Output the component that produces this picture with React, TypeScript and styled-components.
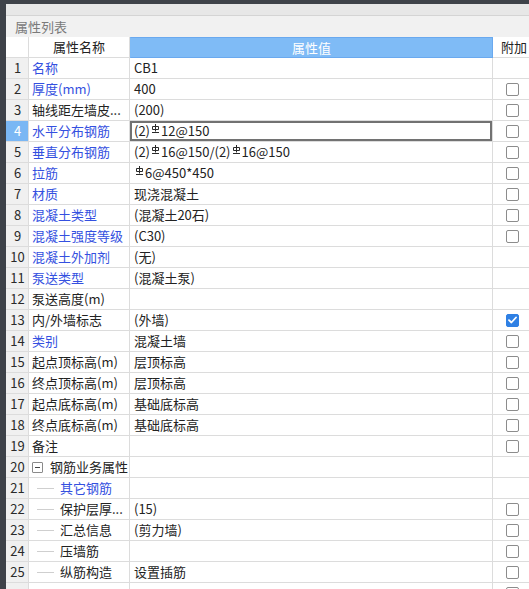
import React from "react";
import styled, { createGlobalStyle, css } from "styled-components";

const Global = createGlobalStyle`
  html, body { margin: 0; padding: 0; background: #ffffff; overflow: hidden; }
  body { font-family: "Noto Sans CJK SC", "Noto Sans", sans-serif; font-size: 13px; }
`;

const Page = styled.div`
  width: 529px;
  height: 589px;
  display: flex;
  flex-direction: column;
  overflow: hidden;
`;

const TopBar = styled.div`
  height: 4px;
  flex: none;
  background: #3e4249;
`;

const Body = styled.div`
  flex: 1;
  display: flex;
  min-height: 0;
`;

const LeftEdge = styled.div`
  width: 6px;
  flex: none;
  background: #3e4249;
`;

const Panel = styled.div`
  flex: 1;
  display: flex;
  flex-direction: column;
  min-width: 0;
  overflow: hidden;
`;

const SubBar = styled.div`
  height: 11px;
  flex: none;
  background: #e7e7e7;
  border-bottom: 1px solid #d4d4d4;
`;

const TitleBar = styled.div`
  height: 21px;
  flex: none;
  background: #f1f1f1;
  color: #7a7a7a;
  display: flex;
  align-items: center;
  padding-left: 9px;
  font-size: 13px;
`;

const Grid = styled.div`
  display: grid;
  grid-template-columns: 23px 101px 363px 44px;
  grid-auto-rows: 21px;
  width: 531px;
`;

const cellBase = css`
  box-sizing: border-box;
  border-right: 1px solid #dcdcdc;
  border-bottom: 1px solid #dcdcdc;
  display: flex;
  align-items: center;
  white-space: nowrap;
  overflow: hidden;
  color: #222;
  line-height: 20px;
`;

const HeadCell = styled.div<{ $accent?: boolean; $left?: boolean }>`
  ${cellBase};
  justify-content: ${(p) => (p.$left ? "flex-start" : "center")};
  padding-left: ${(p) => (p.$left ? "8px" : "0")};
  background: ${(p) => (p.$accent ? "#7fbbf6" : "#ffffff")};
  color: ${(p) => (p.$accent ? "#ffffff" : "#222")};
  ${(p) =>
    p.$accent &&
    css`
      border: 1px solid #6aa9ef;
      border-left-color: #7fbbf6;
    `}
`;

const NumCell = styled.div<{ $active?: boolean }>`
  ${cellBase};
  justify-content: center;
  background: ${(p) => (p.$active ? "#7ab7f4" : "#f0f0f0")};
  color: ${(p) => (p.$active ? "#ffffff" : "#2a2a2a")};
  padding-left: 1px;
`;

const NameCell = styled.div<{ $blue?: boolean; $indent: number }>`
  ${cellBase};
  color: ${(p) => (p.$blue ? "#3450e0" : "#222")};
  padding-left: ${(p) => p.$indent}px;
`;

const ValueCell = styled.div<{ $editing?: boolean }>`
  ${cellBase};
  padding-left: 4px;
  ${(p) =>
    p.$editing &&
    css`
      box-shadow: inset 0 0 0 2px #727272;
    `}
`;

const ExtraCell = styled.div`
  ${cellBase};
  padding-left: 13px;
  border-right: none;
`;

const Box = styled.div<{ $checked?: boolean }>`
  width: 13px;
  height: 13px;
  box-sizing: border-box;
  border-radius: 2px;
  border: 1px solid ${(p) => (p.$checked ? "#2f80e4" : "#8c8c8c")};
  background: ${(p) => (p.$checked ? "#2f80e4" : "#ffffff")};
  display: flex;
  align-items: center;
  justify-content: center;
`;

const TreeToggle = styled.div`
  width: 11px;
  height: 11px;
  box-sizing: border-box;
  border: 1px solid #8a8a8a;
  border-radius: 1px;
  margin-right: 7px;
  display: flex;
  align-items: center;
  justify-content: center;
  &::after {
    content: "";
    width: 5px;
    height: 1px;
    background: #444;
  }
`;

const TreeLine = styled.div`
  width: 17px;
  height: 1px;
  background: #cfcfcf;
  margin-right: 6px;
  flex: none;
`;

const Rebar = styled.svg`
  width: 7px;
  height: 9px;
  margin: 3px 2px 0 2px;
  align-self: flex-start;
  flex: none;
`;

const RebarMark = () => (
  <Rebar viewBox="0 0 7 9">
    <path d="M3.5 0 V7.5 M0.5 2.5 H6.5 V5.5 H0.5 Z M0 8.5 H7" stroke="#2a2a2a" strokeWidth="1" fill="none" />
  </Rebar>
);

const renderValue = (v: string) => {
  const parts = v.split("§");
  return parts.map((p, i) => (
    <React.Fragment key={i}>
      {i > 0 && <RebarMark />}
      {p}
    </React.Fragment>
  ));
};

type Row = {
  name: string;
  value?: string;
  blue?: boolean;
  check?: "none" | "off" | "on";
  tree?: "group" | "child";
  hideNum?: boolean;
};

const rows: Row[] = [
  { name: "名称", value: "CB1", blue: true, check: "none" },
  { name: "厚度(mm)", value: "400", blue: true, check: "off" },
  { name: "轴线距左墙皮...", value: "(200)", check: "off" },
  { name: "水平分布钢筋", value: "(2)§12@150", blue: true, check: "off" },
  { name: "垂直分布钢筋", value: "(2)§16@150/(2)§16@150", blue: true, check: "off" },
  { name: "拉筋", value: "§6@450*450", blue: true, check: "off" },
  { name: "材质", value: "现浇混凝土", blue: true, check: "off" },
  { name: "混凝土类型", value: "(混凝土20石)", blue: true, check: "off" },
  { name: "混凝土强度等级", value: "(C30)", blue: true, check: "off" },
  { name: "混凝土外加剂", value: "(无)", blue: true, check: "none" },
  { name: "泵送类型", value: "(混凝土泵)", blue: true, check: "none" },
  { name: "泵送高度(m)", value: "", check: "none" },
  { name: "内/外墙标志", value: "(外墙)", check: "on" },
  { name: "类别", value: "混凝土墙", blue: true, check: "off" },
  { name: "起点顶标高(m)", value: "层顶标高", check: "off" },
  { name: "终点顶标高(m)", value: "层顶标高", check: "off" },
  { name: "起点底标高(m)", value: "基础底标高", check: "off" },
  { name: "终点底标高(m)", value: "基础底标高", check: "off" },
  { name: "备注", value: "", check: "off" },
  { name: "钢筋业务属性", value: "", check: "none", tree: "group" },
  { name: "其它钢筋", value: "", blue: true, check: "none", tree: "child" },
  { name: "保护层厚...", value: "(15)", check: "off", tree: "child" },
  { name: "汇总信息", value: "(剪力墙)", check: "off", tree: "child" },
  { name: "压墙筋", value: "", check: "off", tree: "child" },
  { name: "纵筋构造", value: "设置插筋", check: "off", tree: "child" },
  { name: "", value: "", check: "off", tree: "child", hideNum: true },
];

const CheckMark = () => (
  <svg width="9" height="8" viewBox="0 0 9 8">
    <path d="M1 4.2 L3.4 6.5 L8 1.5" stroke="#fff" strokeWidth="1.8" fill="none" strokeLinecap="round" strokeLinejoin="round" />
  </svg>
);

export default function App() {
  return (
    <Page>
      <Global />
      <TopBar />
      <Body>
        <LeftEdge />
        <Panel>
          <SubBar />
          <TitleBar>属性列表</TitleBar>
          <Grid>
            <HeadCell />
            <HeadCell>属性名称</HeadCell>
            <HeadCell $accent>属性值</HeadCell>
            <HeadCell $left>附加</HeadCell>
            {rows.map((r, i) => {
              const n = i + 1;
              const indent = r.tree === "child" ? 8 : 3;
              return (
                <React.Fragment key={n}>
                  <NumCell $active={n === 4}>{r.hideNum ? "" : n}</NumCell>
                  <NameCell $blue={r.blue} $indent={indent}>
                    {r.tree === "group" && <TreeToggle />}
                    {r.tree === "child" && <TreeLine />}
                    {r.name}
                  </NameCell>
                  <ValueCell $editing={n === 4}>{renderValue(r.value ?? "")}</ValueCell>
                  <ExtraCell>
                    {r.check !== "none" && (
                      <Box $checked={r.check === "on"}>{r.check === "on" && <CheckMark />}</Box>
                    )}
                  </ExtraCell>
                </React.Fragment>
              );
            })}
          </Grid>
        </Panel>
      </Body>
    </Page>
  );
}
